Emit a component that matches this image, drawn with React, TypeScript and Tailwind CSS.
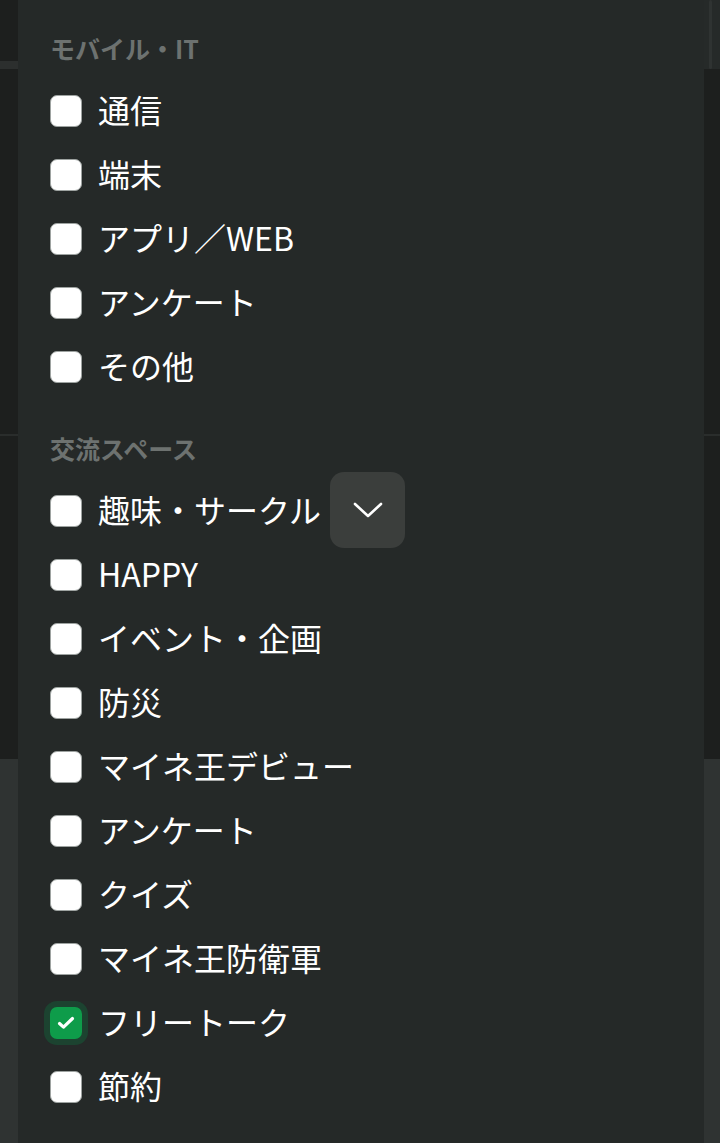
import React from "react";

const mobile = ["通信", "端末", "アプリ／WEB", "アンケート", "その他"];
const lounge = [
  "趣味・サークル",
  "HAPPY",
  "イベント・企画",
  "防災",
  "マイネ王デビュー",
  "アンケート",
  "クイズ",
  "マイネ王防衛軍",
  "フリートーク",
  "節約",
];

function Check({ checked }: { checked?: boolean }) {
  if (checked) {
    return (
      <span className="w-8 h-8 shrink-0 rounded-[7px] bg-[#0e9c4a] ring-[6px] ring-[#1c4330] flex items-center justify-center">
        <svg width="18" height="18" viewBox="0 0 18 18" fill="none">
          <path d="M2.5 9.5l4 3.6L15.5 4.5" stroke="#fff" strokeWidth="3.2" strokeLinecap="round" strokeLinejoin="round" />
        </svg>
      </span>
    );
  }
  return <span className="w-8 h-8 shrink-0 rounded-[7px] bg-white border-[1.5px] border-[#9ea3a1]" />;
}

function Row({ label, checked }: { label: string; checked?: boolean }) {
  return (
    <div className="h-16 flex items-center gap-4">
      <Check checked={checked} />
      <span className="text-[32px] leading-none text-white pb-1">{label}</span>
    </div>
  );
}

function Side({ top }: { top: React.ReactNode }) {
  return (
    <div className="flex flex-col h-full">
      {top}
      <div className="h-[365px] bg-[#1d1f1e]" />
      <div className="h-[2px] bg-[#2a2d2c]" />
      <div className="h-[323px] bg-[#1d1f1e]" />
      <div className="flex-1 bg-[#2f3332]" />
    </div>
  );
}

export default function App() {
  return (
    <div
      className="w-[720px] h-[1143px] flex overflow-hidden bg-[#1d1f1e]"
      style={{ fontFamily: '"Noto Sans CJK JP", "Noto Sans", sans-serif' }}
    >
      {/* backdrop left */}
      <div className="w-[18px] shrink-0">
        <Side
          top={
            <>
              <div className="h-[61px] bg-[#1d1f1e]" />
              <div className="h-[8px] bg-[#2c2f2e]" />
            </>
          }
        />
      </div>

      {/* sheet */}
      <div className="relative w-[686px] shrink-0 bg-[#252928] pl-8 pt-[29px]">
        <div className="h-10 flex items-center text-[25px] font-bold text-[#6d7270]">モバイル・IT</div>
        <div className="mt-[10px]">
          {mobile.map((m) => (
            <Row key={m} label={m} />
          ))}
        </div>

        <div className="mt-[30px] h-10 flex items-center text-[25px] font-bold text-[#6d7270]">交流スペース</div>
        <div className="mt-[10px]">
          {lounge.map((m) => (
            <Row key={m} label={m} checked={m === "フリートーク"} />
          ))}
        </div>

        {/* floating scroll button */}
        <button className="absolute left-[312px] top-[472px] w-[75px] h-[76px] rounded-[14px] bg-[#3b3e3c] flex items-center justify-center">
          <svg width="30" height="18" viewBox="0 0 30 18" fill="none">
            <path d="M2 3l13 12L28 3" stroke="#fff" strokeWidth="2.6" strokeLinecap="round" strokeLinejoin="round" />
          </svg>
        </button>
      </div>

      {/* backdrop right */}
      <div className="w-[16px] shrink-0">
        <Side
          top={
            <div className="h-[69px] bg-[#262a29] flex">
              <div className="w-[5px]" />
              <div className="w-[3px] bg-[#2f3332] rounded-full" />
            </div>
          }
        />
      </div>
    </div>
  );
}
